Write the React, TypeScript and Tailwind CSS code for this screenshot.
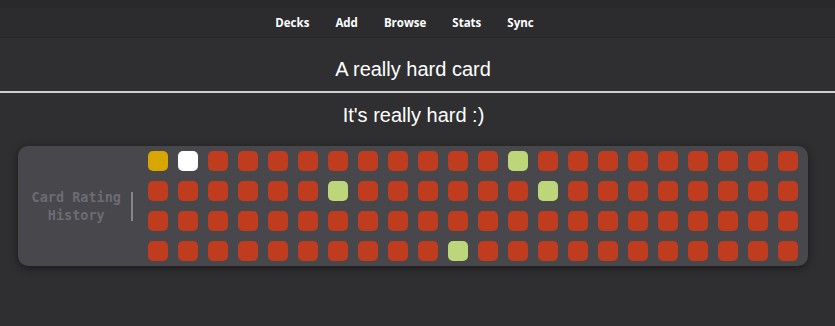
import React from 'react';

const ROWS = 4;
const COLS = 22;

// special cells: [row, col] -> colour
const special: Record<string, string> = {
    '0-0': 'bg-[#d8a600]',
    '0-1': 'bg-white',
    '0-12': 'bg-[#bdd679]',
    '1-6': 'bg-[#bdd679]',
    '1-13': 'bg-[#bdd679]',
    '3-10': 'bg-[#bdd679]',
};

const navLinks = ['Decks', 'Add', 'Browse', 'Stats', 'Sync'];

export default function App() {
    return (
        <div className="min-h-[326px] w-full bg-[#2f2f31] text-white" style={{ fontFamily: '"Liberation Sans", Arial, sans-serif' }}>
            <nav className="h-[38px] border-t-[8px] border-[#29292b] bg-[#2c2c2e] border-b border-b-[#262628] flex items-center justify-center gap-[26px] pr-[26px]">
                {navLinks.map((l) => (
                    <a key={l} className="text-[11.5px] font-bold text-white" style={{ fontFamily: '"Open Sans", sans-serif' }}>
                        {l}
                    </a>
                ))}
            </nav>

            <h1 className="text-center text-[20px] leading-[24px] pt-[19px] pb-[10px] pr-[9px]">A really hard card</h1>
            <hr className="border-0 h-[2px] bg-[#cfcfd1]" />
            <p className="text-center text-[20px] leading-[24px] pt-[10px] pr-[8px]">It's really hard :)</p>

            <div className="ml-[18px] mt-[19px] w-fit flex items-center bg-[#47474c] rounded-[10px] py-[5px] pr-[10px] shadow-[0_2px_8px_rgba(0,0,0,0.45)]">
                <div className="w-[130px] flex items-center justify-end pr-[15px]">
                    <div
                        className="text-[13.5px] leading-[18px] font-bold text-[#6c6c72] text-center pr-[10px]"
                        style={{ fontFamily: '"DejaVu Sans Mono", monospace' }}
                    >
                        Card Rating<br />History
                    </div>
                    <div className="w-[2px] h-[29px] bg-[#85858a]" />
                </div>
                <div className="grid grid-cols-[repeat(22,20px)] gap-[10px]">
                    {Array.from({ length: ROWS * COLS }).map((_, i) => {
                        const r = Math.floor(i / COLS);
                        const c = i % COLS;
                        const cls = special[`${r}-${c}`] ?? 'bg-[#bf3c1e]';
                        return <div key={i} className={`w-[20px] h-[20px] rounded-[5px] ${cls}`} />;
                    })}
                </div>
            </div>
        </div>
    );
}
